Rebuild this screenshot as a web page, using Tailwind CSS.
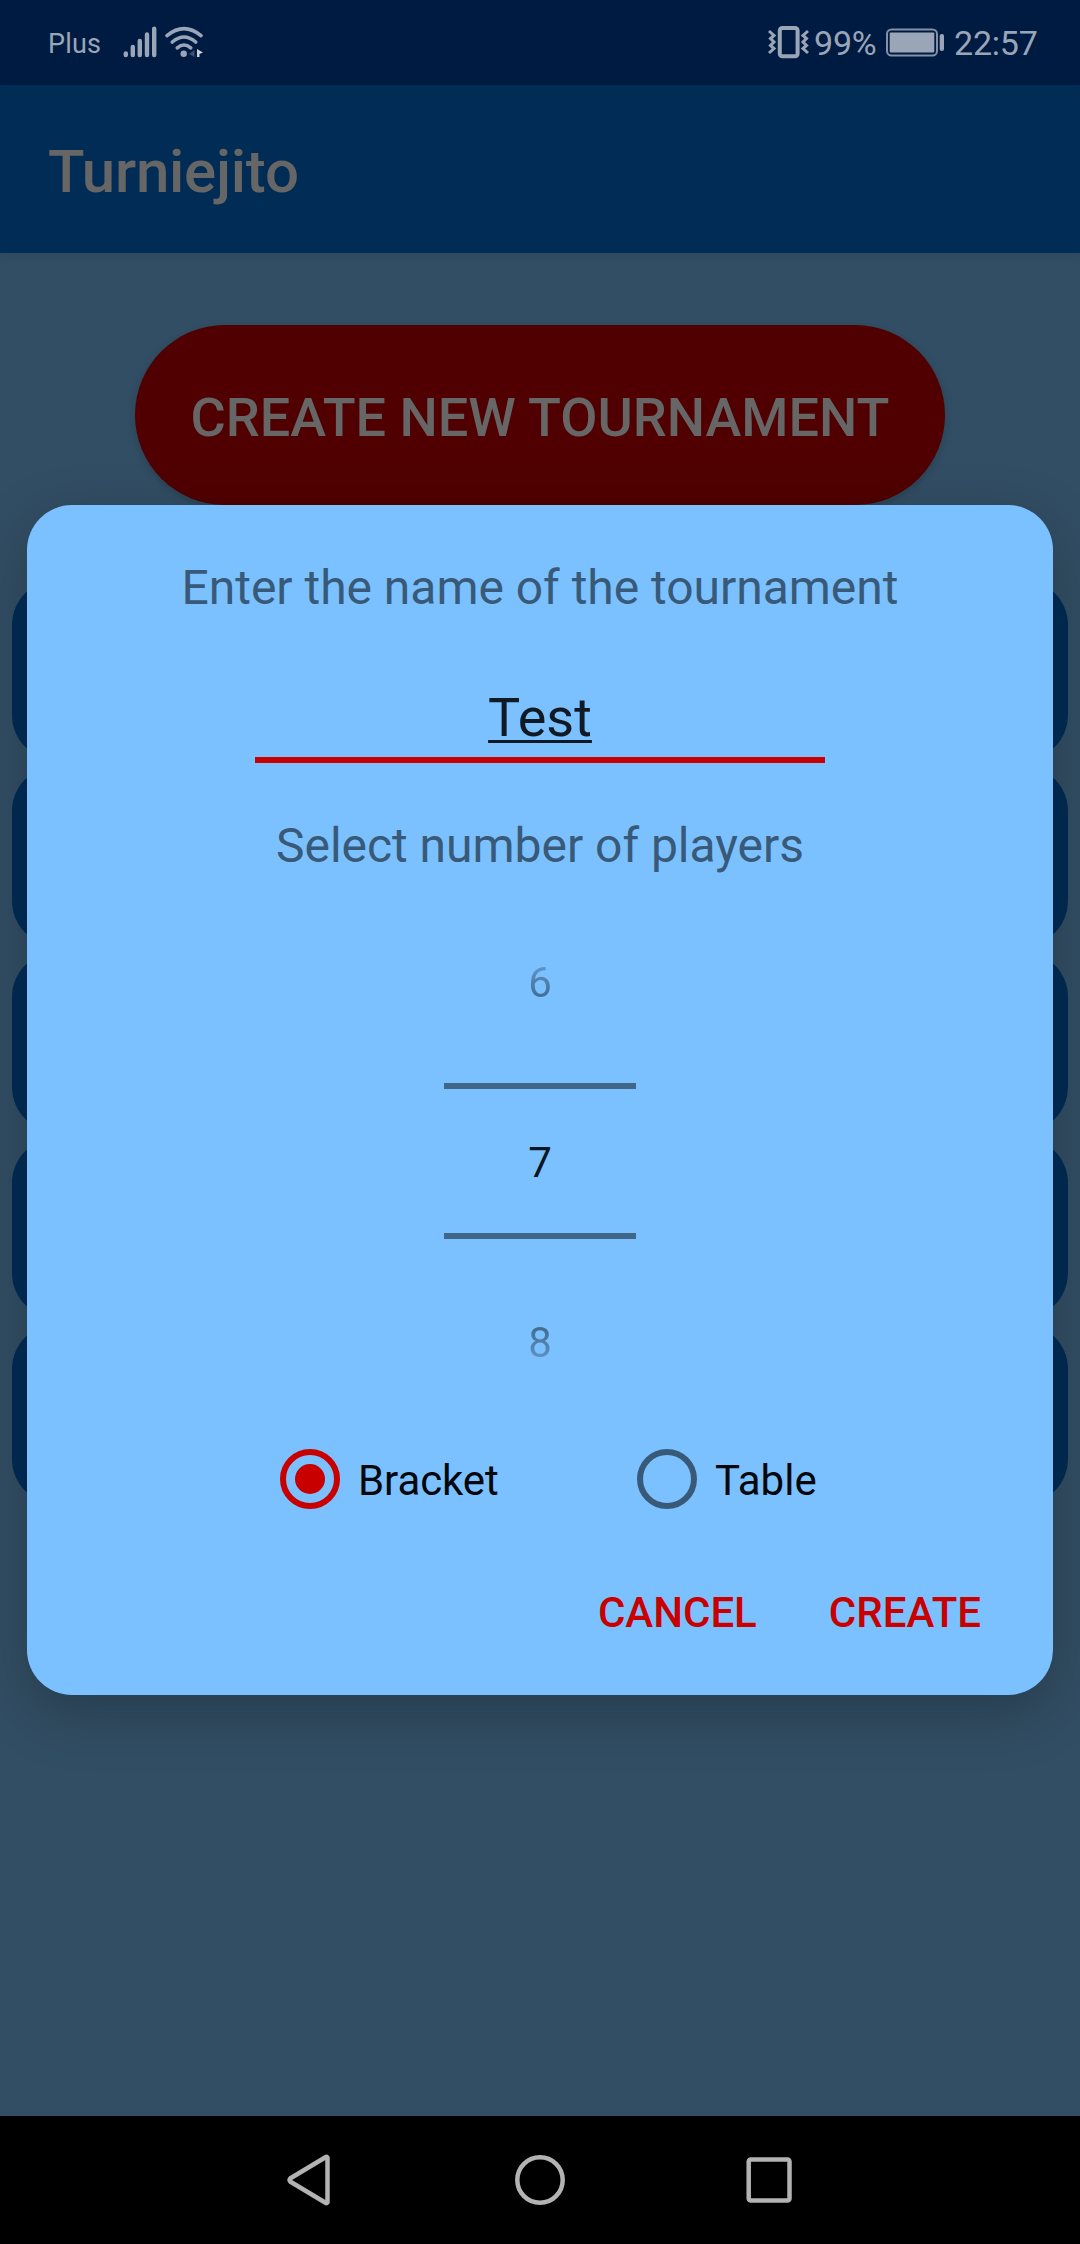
<!DOCTYPE html>
<html lang="en">
<head>
<meta charset="utf-8">
<title>Turniejito</title>
<script src="https://cdn.jsdelivr.net/npm/@tailwindcss/browser@4"></script>
</head>
<body class="relative flex h-[2244px] w-[1080px] flex-col overflow-hidden bg-[#324e64] font-['Roboto',sans-serif]">
  <!-- Status bar -->
  <header class="flex h-[85px] shrink-0 items-start bg-[#001b41] text-[#9aa5b8]">
    <span class="ml-[48px] mt-[26px] w-[74px] text-[27px] leading-[36px] tracking-[0.2px]">Plus</span>
    <svg class="mt-[20px] h-[44px] w-[84px]" viewBox="122 20 84 44" fill="none" stroke="#9aa5b8" stroke-linecap="round">
      <g stroke-width="4.4"><path d="M125.800 53.400v1.600M132.800 47v8M139.800 41v14M147 34.500v20.500M154.200 28.700v26.300"/></g>
      <g stroke-width="3.6"><path d="M167 35.600q17-14 34 0M172.300 42q11.700-10 23.400 0M177.300 47.800q6.700-5.600 13.400 0"/></g>
      <circle cx="183.700" cy="53.700" r="3.200" fill="#9aa5b8" stroke="none"/>
      <path d="M189 54l5.500-4v7z" fill="#3b4f6e" stroke="none"/>
      <path d="M197 49l6 3.500l-3.500 1.500v3l-2.500 0z" fill="#c8cfd8" stroke="none"/>
    </svg>
    <div class="ml-auto mr-[42px] flex items-start">
      <svg class="mt-[20px] h-[44px] w-[46px]" viewBox="767 20 46 44" fill="none" stroke="#9aa5b8">
        <rect x="779.800" y="28" width="17.800" height="28.300" rx="2.500" stroke-width="4"/>
        <path d="M769 31l5 4.500l-3.500 3l3.500 3.500l-3.500 3.500l3.500 3l-5 4.500M808 31l-5 4.500l3.500 3l-3.500 3.500l3.500 3.500l-3.500 3l5 4.500" stroke-width="3"/>
      </svg>
      <span class="mt-[23px] w-[70px] pl-px text-[34px] leading-[40px] tracking-[-0.2px]">99%</span>
      <svg class="mt-[20px] h-[44px] w-[64px]" viewBox="883 20 64 44" fill="none" stroke="#8490a6">
        <rect x="887" y="29.500" width="50" height="26" rx="4.500" stroke-width="2"/>
        <rect x="889.700" y="32.500" width="44.600" height="20" rx="1" fill="#9aa5b8" stroke="none"/>
        <rect x="939.700" y="34" width="4.300" height="17" rx="2" fill="#9aa5b8" stroke="none"/>
      </svg>
      <span class="ml-[7px] mt-[23px] w-[84px] whitespace-nowrap text-[34px] leading-[40px] tracking-[-0.2px]">22:57</span>
    </div>
  </header>

  <!-- App bar -->
  <div class="flex h-[168px] shrink-0 items-center bg-[#002c55] px-[48px] pt-[5px] text-[60px] font-medium leading-[70px] tracking-[-0.25px] text-[#666] shadow-[0_3px_10px_rgba(0,0,0,0.08)]">Turniejito</div>

  <!-- Screen behind the dialog -->
  <main class="flex grow flex-col items-center pt-[72px]">
    <button class="h-[180px] w-[810px] shrink-0 rounded-full bg-[#500000] pt-[5px] text-[54px] font-medium leading-[64px] text-[#666] shadow-[0_3px_8px_rgba(0,0,0,0.18)]">CREATE NEW TOURNAMENT</button>
    <div class="mt-[75px] flex w-full flex-col gap-[6px] px-[12px]">
      <div class="h-[180px] rounded-[45px] bg-[#002c55]"></div>
      <div class="h-[180px] rounded-[45px] bg-[#002c55]"></div>
      <div class="h-[180px] rounded-[45px] bg-[#002c55]"></div>
      <div class="h-[180px] rounded-[45px] bg-[#002c55]"></div>
      <div class="h-[180px] rounded-[45px] bg-[#002c55]"></div>
    </div>
  </main>

  <!-- Dialog -->
  <section class="absolute left-[27px] top-[505px] flex h-[1190px] w-[1026px] flex-col items-center rounded-[45px] bg-[#7cc1ff] pt-[55px] shadow-[0_18px_60px_rgba(0,0,0,0.24)]">
    <p class="text-[48px] leading-[56px] tracking-[-0.03px] text-[#385a78]">Enter the name of the tournament</p>
    <div class="mt-[70px] flex h-[77px] w-[570px] justify-center border-b-[6px] border-[#c80000] text-[54px] leading-[64px] text-[#0f1a24]">
      <span class="underline decoration-[3px] underline-offset-[4px] [text-decoration-skip-ink:none]">Test</span>
    </div>
    <p class="mt-[55px] text-[48px] leading-[56px] tracking-[-0.03px] text-[#385a78]">Select number of players</p>
    <div class="mt-[79px] flex w-[192px] flex-col text-center text-[42px] leading-[60px]">
      <span class="bg-linear-to-b from-[#5f97c8] from-20% to-[#40688d] to-80% bg-clip-text text-transparent">6</span>
      <div class="mt-[70px] h-[6px] bg-[#416788]"></div>
      <span class="mt-[44px] text-[#0b1721]">7</span>
      <div class="mt-[40px] h-[6px] bg-[#416788]"></div>
      <span class="mt-[74px] bg-linear-to-b from-[#40688d] from-20% to-[#5f97c8] to-80% bg-clip-text text-transparent">8</span>
    </div>
    <div class="mt-[76px] flex h-[60px] w-full pl-[253px] text-[42px] leading-[60px] text-[#02070c]">
      <label class="flex w-[357px] gap-[18px]">
        <span class="flex size-[60px] items-center justify-center rounded-full border-[6px] border-[#c80000]"><span class="size-[30px] rounded-full bg-[#c80000]"></span></span>
        <span class="mt-[2px] tracking-[-0.1px]">Bracket</span>
      </label>
      <label class="flex gap-[18px]">
        <span class="size-[60px] rounded-full border-[6px] border-[#385a78]"></span>
        <span class="mt-[2px]">Table</span>
      </label>
    </div>
    <div class="mt-[74px] flex w-full justify-end gap-[72px] pr-[72px] text-[42px] font-medium leading-[60px] text-[#c80000]">
      <button>CANCEL</button>
      <button>CREATE</button>
    </div>
  </section>

  <!-- Navigation bar -->
  <nav class="flex h-[128px] shrink-0 items-center justify-center bg-black">
    <svg class="h-[128px] w-[540px]" viewBox="270 2116 540 128" fill="none" stroke="#b3b3b3" stroke-width="4.500" stroke-linejoin="round">
      <path d="M327.500 2157.500v45q-1 1-2 .3l-35-21q-2-1.800 0-3.600l35-21q1-.7 2 .3z"/>
      <circle cx="540" cy="2180" r="22.700"/>
      <rect x="748.700" y="2159.500" width="40.800" height="41" rx="2"/>
    </svg>
  </nav>
</body>
</html>
